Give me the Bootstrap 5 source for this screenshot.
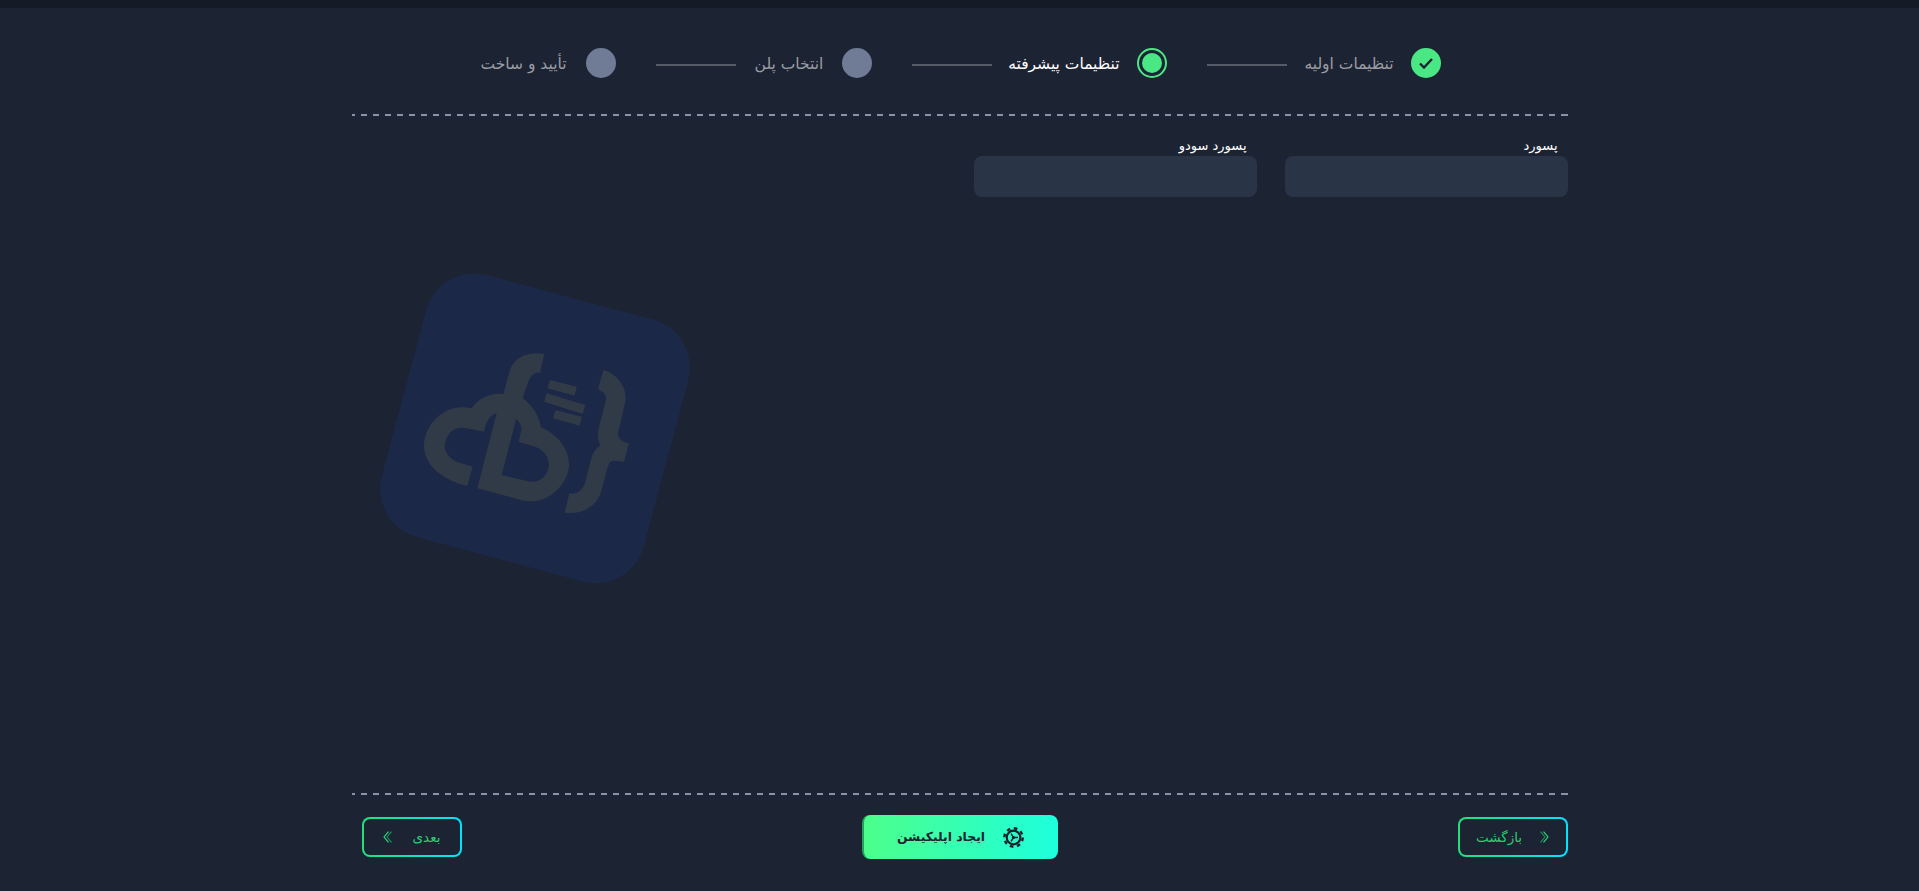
<!DOCTYPE html>
<html lang="fa" dir="rtl">
  <head>
    <meta charset="UTF-8" />
    <meta name="viewport" content="width=device-width, initial-scale=1.0" />
    <link
      href="https://cdn.jsdelivr.net/npm/bootstrap@5.3.0/dist/css/bootstrap.min.css"
      rel="stylesheet"
    />
    <title>ایجاد اپلیکیشن</title>
    <style>
      body {
        background-color: #1c2333;
        font-family: "DejaVu Sans", sans-serif;
        min-height: 891px;
        overflow: hidden;
      }

      .top-strip {
        height: 8px;
        background-color: #141a26;
      }

      .wizard {
        width: 1216px;
        height: 883px;
        margin: 0 auto;
        position: relative;
      }

      .stepper {
        height: 106px;
        padding-top: 4px;
      }

      .step-dot {
        width: 30px;
        height: 30px;
        border-radius: 50%;
        background-color: #707c96;
        flex-shrink: 0;
      }

      .step-done {
        background-color: #4ae885;
      }

      .step-active {
        background-color: transparent;
        border: 2px solid #4ae885;
        padding: 3px;
      }

      .step-active span {
        display: block;
        width: 100%;
        height: 100%;
        border-radius: 50%;
        background-color: #4ae885;
      }

      .step-label {
        font-size: 15.5px;
        color: #9b9da3;
        margin-top: 3px;
        margin-right: 17px;
        margin-left: 18px;
        white-space: nowrap;
        text-align: center;
      }

      .label-first { width: 89px; }
      .label-second { width: 110px; }
      .label-third { width: 71px; }
      .label-fourth { width: 90px; margin-left: 0; }

      .step-label-active {
        color: #fff;
      }

      .step-line {
        width: 80px;
        height: 2px;
        background-color: #555c68;
        margin-left: 40px;
        margin-top: 3px;
      }

      .dash-line {
        height: 2px;
        background-image: repeating-linear-gradient(to right, #8a93a6 0 6px, transparent 6px 12px);
        background-position: -3px 0;
      }

      .form-area {
        display: grid;
        grid-template-columns: repeat(4, 283px);
        gap: 28px;
        padding-top: 22px;
      }

      .field-label {
        font-size: 13px;
        color: #fff;
        line-height: 16px;
        padding-right: 10px;
        margin-bottom: 2px;
        display: block;
      }

      .field-input {
        height: 41px;
        border: 0;
        border-radius: 8px;
        background-color: #293446;
        color: #fff;
      }

      .field-input:focus {
        background-color: #293446;
        color: #fff;
        box-shadow: none;
      }

      .watermark {
        position: absolute;
        left: 8px;
        top: 242px;
        width: 340px;
        height: 340px;
      }

      .footer-bar {
        position: absolute;
        bottom: 0;
        left: 0;
        right: 0;
        height: 98px;
      }

      .footer-row {
        padding-top: 20px;
      }

      .btn-outline-grad {
        height: 40px;
        border: 2px solid transparent;
        border-radius: 8px;
        background: linear-gradient(#1c2333, #1c2333) padding-box,
          linear-gradient(to right, #22e07a, #00e5ff) border-box;
        color: #2ecc71;
        font-size: 13.5px;
        font-weight: 500;
        padding: 0;
      }

      .btn-outline-grad:hover {
        color: #2ecc71;
      }

      .btn-back {
        width: 110px;
        gap: 18px;
      }

      .btn-next {
        width: 100px;
        margin-left: 10px;
        gap: 21px;
      }

      .btn-create {
        width: 196px;
        height: 44px;
        border: 0;
        border-left: 2px solid #1fa35a;
        border-radius: 8px;
        background: linear-gradient(to right, #4cff8a, #1dffdd);
        color: #1c2331;
        font-size: 12.4px;
        font-weight: 700;
        padding: 0;
        gap: 18px;
      }
    </style>
  </head>

  <body>
    <div class="top-strip"></div>
    <div class="wizard">
      <div class="stepper d-flex justify-content-center align-items-center">
        <div class="step-dot step-done d-flex align-items-center justify-content-center">
          <svg width="14" height="11" viewBox="0 0 14 11" fill="none" stroke="#1c2331" stroke-width="2.4"><path d="M1 5.5l4 4 8-8.5" /></svg>
        </div>
        <span class="step-label label-first">تنظیمات اولیه</span>
        <div class="step-line"></div>
        <div class="step-dot step-active"><span></span></div>
        <span class="step-label step-label-active label-second">تنظیمات پیشرفته</span>
        <div class="step-line"></div>
        <div class="step-dot"></div>
        <span class="step-label label-third">انتخاب پلن</span>
        <div class="step-line"></div>
        <div class="step-dot"></div>
        <span class="step-label label-fourth">تأیید و ساخت</span>
      </div>
      <div class="dash-line"></div>
      <div class="form-area">
        <div>
          <label class="field-label" for="pass">پسورد</label>
          <input id="pass" type="password" class="form-control field-input" />
        </div>
        <div>
          <label class="field-label" for="sudo">پسورد سودو</label>
          <input id="sudo" type="password" class="form-control field-input" />
        </div>
      </div>

      <svg class="watermark" viewBox="0 0 1020 1020">
        <rect x="118" y="128" width="814" height="814" rx="150" fill="#1c2848" transform="rotate(15 525 535)" />
        <g fill="#313a47">
          <path d="M553 312C515 305 465 315 450 360L430 432C390 428 355 445 335 475C250 455 190 530 192 590C195 650 250 690 322 708L338 650L290 635C265 625 250 600 255 580C265 540 290 528 320 535L372 545C378 515 390 495 410 490L352 715L490 752C560 765 620 710 627 650C630 600 595 555 543 532C535 490 515 465 488 445L505 395C515 370 530 365 540 368Z
          M468 508L425 675L510 695C545 700 565 670 567 645C565 615 550 600 525 590L476 575L484 540C485 525 478 515 468 508Z" fill-rule="evenodd" />
          <path d="M730 360C770 370 800 410 797 450L775 545C772 565 785 575 807 580L792 635L760 632C750 632 745 645 742 655L722 730C705 775 660 795 614 788L628 730C650 735 668 720 675 700L690 640C697 610 705 595 722 587C712 570 712 550 717 530L738 450C740 435 730 425 714 417Z" />
          <path d="M570 390L650 410L644 437L562 415Z" />
          <path d="M560 430L676 465L668 492L552 455Z" />
          <path d="M586 480L665 500L659 527L579 505Z" />
        </g>
      </svg>

      <div class="footer-bar">
        <div class="dash-line"></div>
        <div class="footer-row d-flex justify-content-between align-items-center">
          <button type="button" class="btn btn-outline-grad btn-back d-flex align-items-center justify-content-center">
            <svg width="9" height="12" viewBox="0 0 9 12" fill="none" stroke-width="1.1"><path d="M.5 .7l4.5 5.3-4.5 5.3" stroke="#1f9060" /><path d="M3.5 .7l4.5 5.3-4.5 5.3" stroke="#2ee07a" /></svg>
            <span>بازگشت</span>
          </button>
          <button type="button" class="btn btn-create d-flex align-items-center justify-content-center">
            <svg width="21" height="21" viewBox="0 0 21 21" fill="none" stroke="#15202b">
              <circle cx="10.5" cy="10.5" r="9.2" stroke-width="2.4" stroke-dasharray="3.6 3.63" />
              <circle cx="10.5" cy="10.5" r="6.8" stroke-width="2.2" />
              <circle cx="10.5" cy="10.5" r="1.6" fill="#15202b" stroke="none" />
              <path d="M10.5 10.5H15M10.5 10.5l-2.4-3.9M10.5 10.5l-2.4 3.9" stroke-width="1.5" />
            </svg>
            <span>ایجاد اپلیکیشن</span>
          </button>
          <button type="button" class="btn btn-outline-grad btn-next d-flex align-items-center justify-content-center">
            <span>بعدی</span>
            <svg width="9" height="12" viewBox="0 0 9 12" fill="none" stroke-width="1.1"><path d="M8.5 .7L4 6l4.5 5.3" stroke="#1f9060" /><path d="M5.5 .7L1 6l4.5 5.3" stroke="#2ee07a" /></svg>
          </button>
        </div>
      </div>
    </div>

    <script src="https://cdn.jsdelivr.net/npm/bootstrap@5.3.0/dist/js/bootstrap.bundle.min.js"></script>
  </body>
</html>
